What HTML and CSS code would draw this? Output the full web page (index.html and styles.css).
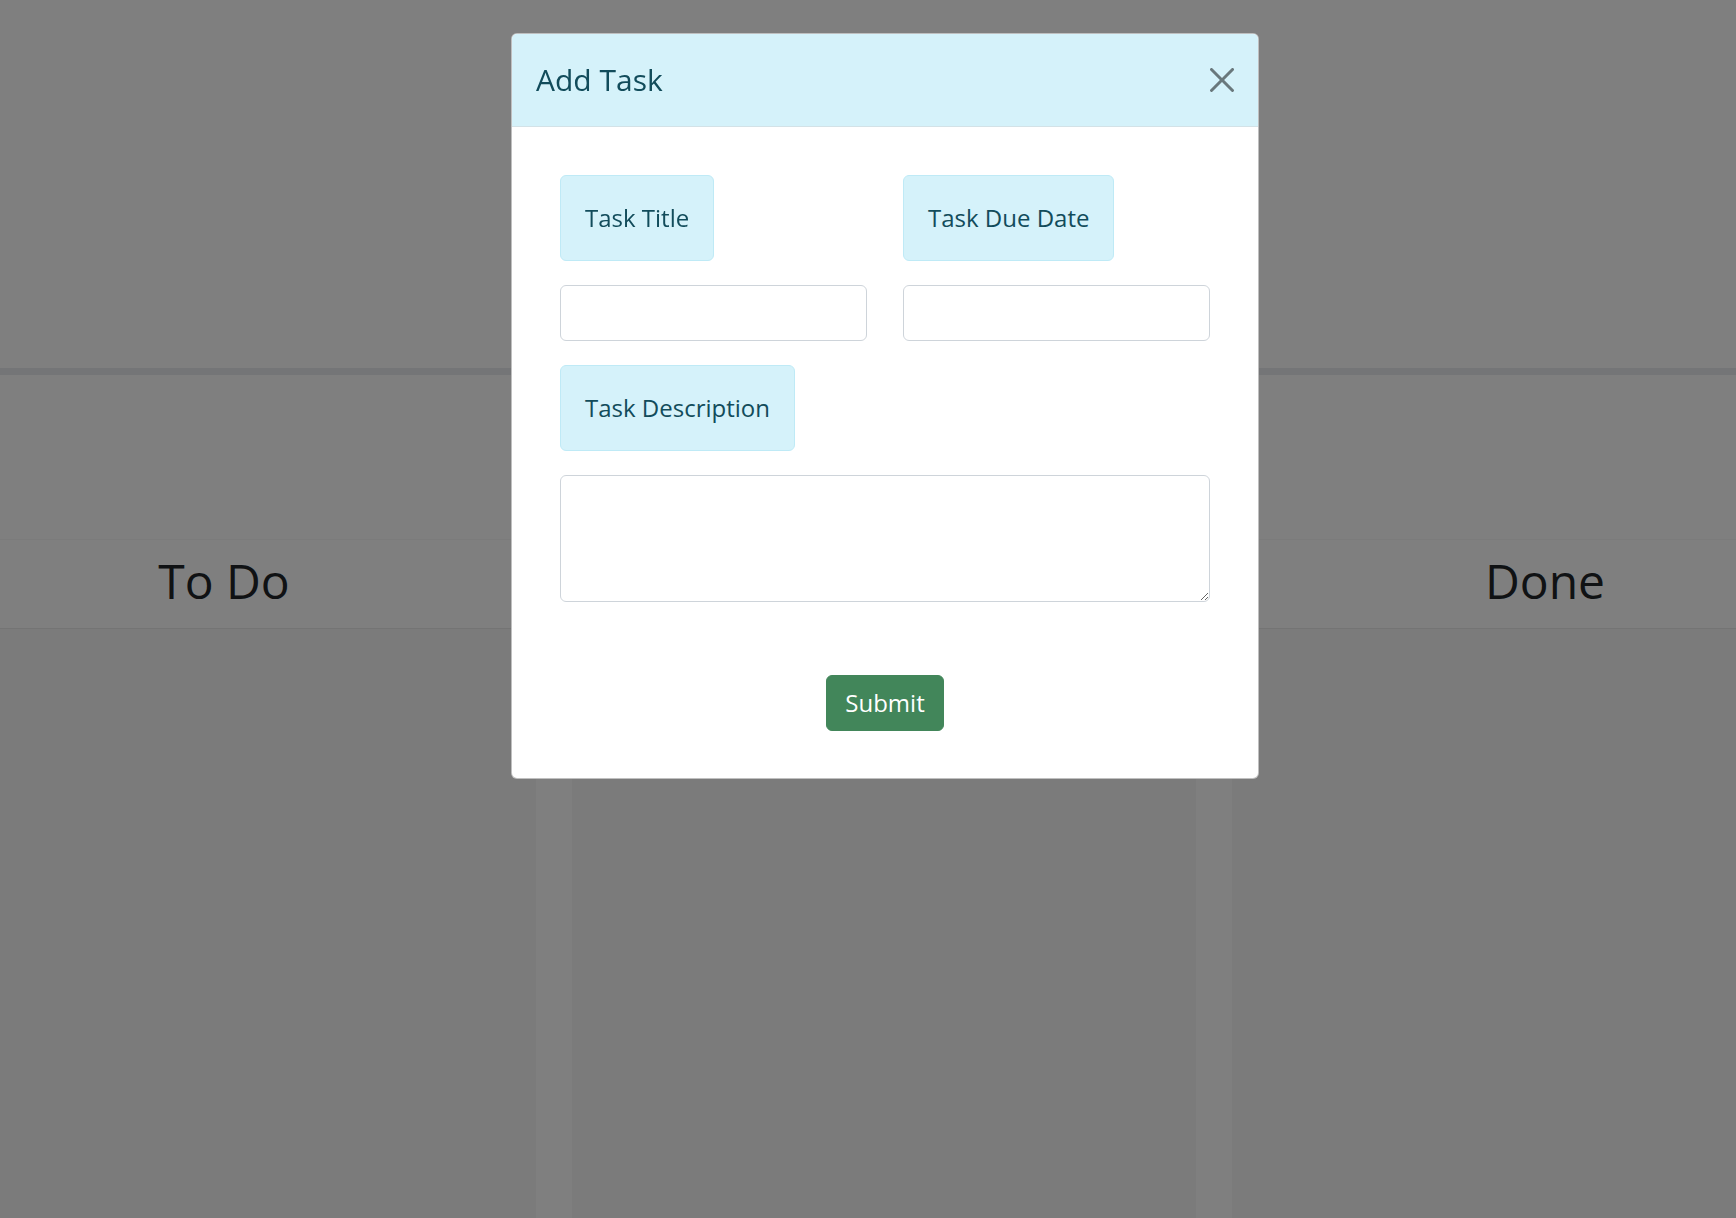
FILE: index.html
```html
<!DOCTYPE html>
<html lang="en">
<head>
<meta charset="utf-8">
<title>Task Board</title>
<link rel="stylesheet" href="styles.css">
</head>
<body>
<div class="page">
  <div class="top-area"></div>
  <div class="divider"></div>
  <div class="spacer"></div>
  <div class="board-head">
    <h2 class="col-title">To Do</h2>
    <h2 class="col-title">In Progress</h2>
    <h2 class="col-title">Done</h2>
  </div>
  <div class="board-cols">
    <div class="board-col"></div>
    <div class="board-col"></div>
    <div class="board-col"></div>
  </div>
</div>

<div class="backdrop"></div>

<div class="modal">
  <div class="modal-header">
    <h5 class="modal-title">Add Task</h5>
    <button class="btn-close" type="button" aria-label="Close">
      <svg viewBox="0 0 16 16" width="24" height="24" aria-hidden="true"><path d="M.293.293a1 1 0 0 1 1.414 0L8 6.586 14.293.293a1 1 0 1 1 1.414 1.414L9.414 8l6.293 6.293a1 1 0 0 1-1.414 1.414L8 9.414l-6.293 6.293a1 1 0 0 1-1.414-1.414L6.586 8 .293 1.707a1 1 0 0 1 0-1.414z"/></svg>
    </button>
  </div>
  <form class="modal-body">
    <div class="row-two">
      <div class="field">
        <label class="tag" for="title">Task Title</label>
        <input class="control" id="title" type="text">
      </div>
      <div class="field">
        <label class="tag" for="due">Task Due Date</label>
        <input class="control" id="due" type="text">
      </div>
    </div>
    <div class="field field-wide">
      <label class="tag" for="desc">Task Description</label>
      <textarea class="control area" id="desc"></textarea>
    </div>
    <div class="actions">
      <button class="btn-submit" type="button">Submit</button>
    </div>
  </form>
</div>
</body>
</html>
```

FILE: styles.css
```css
* { box-sizing: border-box; }

html, body {
  margin: 0;
  padding: 0;
  height: 100%;
  overflow: hidden;
}

body {
  font-family: "Open Sans", "Noto Sans", sans-serif;
  background: #ffffff;
  color: #212529;
}

.page {
  height: 100vh;
  display: flex;
  flex-direction: column;
}

.top-area { height: 368px; }

.divider {
  height: 7px;
  background: #e9eaee;
}

.spacer { height: 164px; }

.board-head {
  display: grid;
  grid-template-columns: 448px 1fr 382px;
  border-top: 1px solid #f6f6f6;
  border-bottom: 1px solid #e8e8e8;
  padding: 12px 0 18px;
}

.col-title {
  margin: 0;
  text-align: center;
  font-size: 48px;
  line-height: 57.6px;
  font-weight: 400;
  color: #212529;
}

.board-cols {
  flex: 1;
  display: grid;
  grid-template-columns: 536px 624px 504px;
  column-gap: 36px;
}

.board-col { background: #f7f7f7; }

.backdrop {
  position: fixed;
  inset: 0;
  background: rgba(0, 0, 0, 0.5);
}

.modal {
  position: absolute;
  top: 33px;
  left: 511px;
  width: 748px;
  background: #ffffff;
  border: 1px solid rgba(0, 0, 0, 0.25);
  border-radius: 6px;
  overflow: hidden;
}

.modal-header {
  display: flex;
  align-items: center;
  justify-content: space-between;
  padding: 23px 24px;
  background: #d5f2fa;
  border-bottom: 1px solid #d3e2e7;
}

.modal-title {
  margin: 0;
  font-size: 30px;
  line-height: 46px;
  font-weight: 400;
  color: #124c5b;
}

.btn-close {
  display: flex;
  padding: 0;
  border: 0;
  background: transparent;
  width: 24px;
  height: 24px;
  opacity: 0.5;
  cursor: pointer;
}

.btn-close svg { fill: #000000; display: block; }

.modal-body {
  padding: 48px 48px 47px;
  display: flex;
  flex-direction: column;
}

.row-two {
  display: grid;
  grid-template-columns: 1fr 1fr;
  column-gap: 36px;
}

.field {
  display: flex;
  flex-direction: column;
  align-items: flex-start;
  gap: 24px;
}

.field-wide { margin-top: 24px; }

.tag {
  display: inline-block;
  padding: 24px;
  font-size: 24px;
  line-height: 36px;
  color: #124c5b;
  background: #d5f2fa;
  border: 1px solid #bfeaf6;
  border-radius: 6px;
}

.control {
  display: block;
  width: 100%;
  height: 56px;
  padding: 9px 18px;
  font-family: inherit;
  font-size: 24px;
  border: 1px solid #ced4da;
  border-radius: 6px;
  background: #ffffff;
}

.area {
  height: 127px;
  resize: vertical;
}

.actions {
  display: flex;
  justify-content: center;
  margin-top: 73px;
}

.btn-submit {
  font-family: inherit;
  font-size: 24px;
  line-height: 36px;
  padding: 9px 18px;
  color: #ffffff;
  background: #42865a;
  border: 1px solid #42865a;
  border-radius: 6px;
  cursor: pointer;
}
```
